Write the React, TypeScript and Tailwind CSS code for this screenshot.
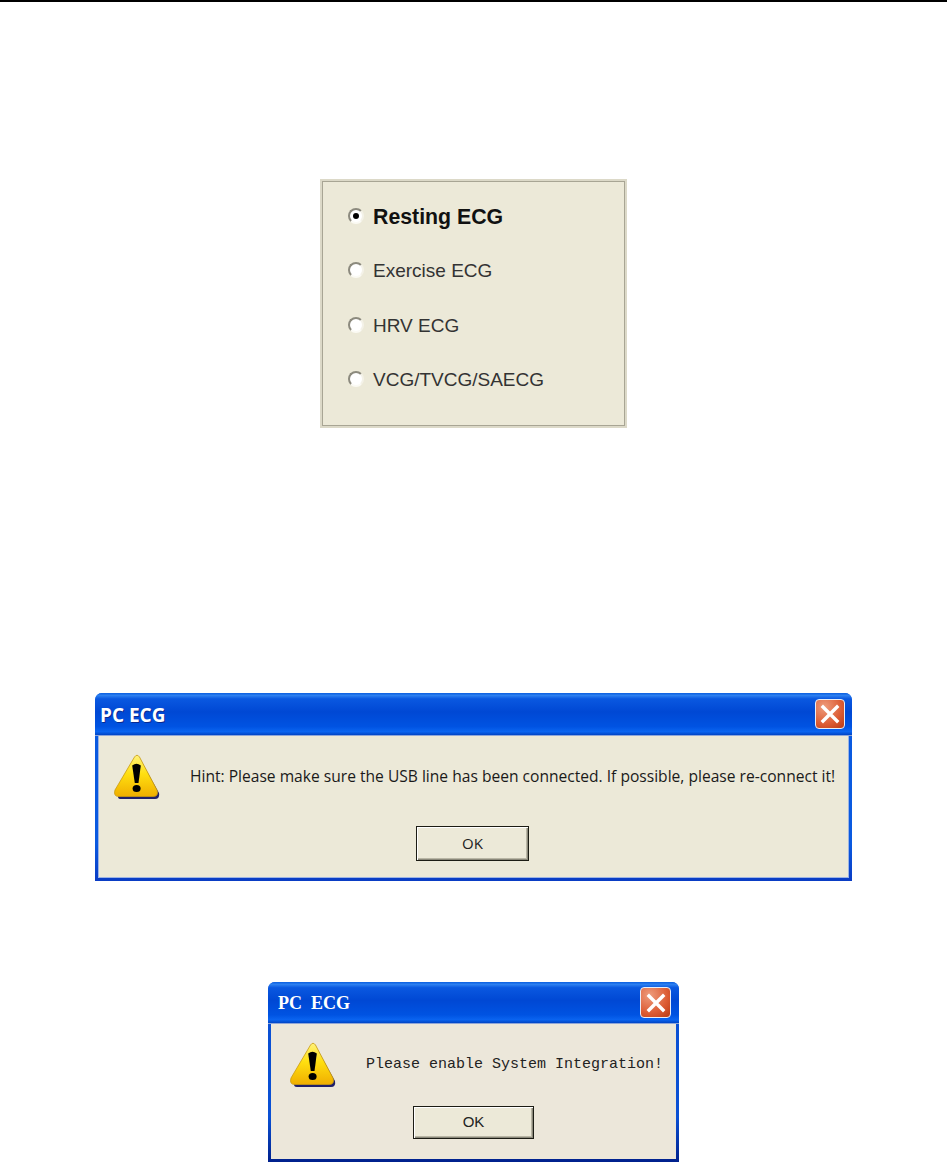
import React from 'react';

const modes = [
  { label: 'Resting ECG', active: true },
  { label: 'Exercise ECG', active: false },
  { label: 'HRV ECG', active: false },
  { label: 'VCG/TVCG/SAECG', active: false },
];

function WarningIcon({ id, className }: { id: string; className: string }) {
  return (
    <svg viewBox="0 0 46 46" className={className}>
      <defs>
        <linearGradient id={id} x1="0" y1="0" x2="0" y2="1">
          <stop offset="0" stopColor="#fff27a" />
          <stop offset="0.45" stopColor="#ffdf10" />
          <stop offset="1" stopColor="#f0ae00" />
        </linearGradient>
      </defs>
      <path d="M25 3 L45 39 Q46 45 41 45 L7 45 Q3 45 4.5 41 Z" fill="#20206a" />
      <path d="M20.5 3 Q23 -0.5 25.5 3 L43 36 Q45 42.5 39 42.5 L5 42.5 Q-1 42.5 1 36 Z" fill={`url(#${id})`} stroke="#c99a10" strokeWidth="0.8" />
      <path d="M18.2 11.5 Q22.5 8 26.8 11.5 L24.5 29 L20.8 29 Z" fill="#000" />
      <ellipse cx="22.6" cy="34.5" rx="4" ry="3.6" fill="#000" />
    </svg>
  );
}

function CloseButton({ className }: { className: string }) {
  return (
    <div className={`flex items-center justify-center rounded-[4px] border border-[#e8eef8] bg-[radial-gradient(circle_at_30%_25%,#ee9c7c,#dc5c34_60%,#b93a14)] ${className}`}>
      <svg viewBox="0 0 20 20" className="h-[20px] w-[20px]">
        <path d="M3 3 L17 17 M17 3 L3 17" stroke="#fff" strokeWidth="3.4" strokeLinecap="square" />
      </svg>
    </div>
  );
}

function TitleBar({ className, children }: { className: string; children: React.ReactNode }) {
  return (
    <div className={`flex items-center justify-between rounded-t-[7px] border-b border-[#8fa6d8] bg-[linear-gradient(to_bottom,#0a5fe0_0%,#2c7ff0_6%,#0a58e0_14%,#0048d4_45%,#0053e2_80%,#0a64f0_92%,#0044c4_100%)] text-white ${className}`}>
      {children}
    </div>
  );
}

function OkButton({ className }: { className: string }) {
  return (
    <div className={`flex items-center justify-center border border-[#1c1c14] bg-[#ece9d8] text-[#222] shadow-[inset_1px_1px_0_#fff,inset_-1px_-1px_0_#8a887a,inset_-2px_-2px_0_#b8b5a4] ${className}`}>
      OK
    </div>
  );
}

export default function App() {
  return (
    <div className="flex min-h-[1164px] flex-col items-center bg-white font-['Liberation_Sans',sans-serif]">
      <div className="h-[2px] w-full bg-black" />

      <div className="mt-[177px] flex h-[249px] w-[307px] flex-col gap-[34.4px] border-2 border-[#dcd9c8] bg-[#ece9d8] pl-[26px] pt-[25px] shadow-[inset_0_0_0_1px_#a8a594]">
        {modes.map((mode) => (
          <div key={mode.label} className="flex h-[20px] items-center gap-[9px]">
            <div className="flex h-[16px] w-[16px] items-center justify-center rounded-full border-2 border-[#8c8a7e] border-r-[#f4f2e8] border-b-[#fbfaf4] bg-white">
              {mode.active && <div className="h-[6px] w-[6px] rounded-full bg-black" />}
            </div>
            <span className={mode.active ? 'pt-[3px] text-[21.3px] font-bold text-[#111]' : 'pt-[2px] text-[19px] text-[#333]'}>
              {mode.label}
            </span>
          </div>
        ))}
      </div>

      <div className="mt-[265px] w-[757px] rounded-t-[7px] bg-[linear-gradient(to_bottom,#0a5ae0_80%,#0a3cc4)]">
        <TitleBar className="h-[43px] pl-[5px] pr-[7px] font-['Open_Sans',sans-serif] text-[19px] font-bold [text-shadow:1px_1px_0_#0a2a90]">
          <span className="pt-[2px]">PC ECG</span>
          <CloseButton className="h-[30px] w-[30px]" />
        </TitleBar>
        <div className="mx-[3px] mb-[3px] flex h-[142px] flex-col border-x border-b border-[#9db4e4] bg-[#ece9d8] pl-[15px] pt-[18px]">
          <div className="flex items-center gap-[30px]">
            <WarningIcon id="warn-usb" className="h-[46px] w-[46px] shrink-0" />
            <span className="whitespace-nowrap font-['Open_Sans',sans-serif] text-[15.6px] text-[#1a1a1a]">
              Hint: Please make sure the USB line has been connected. If possible, please re-connect it!
            </span>
          </div>
          <OkButton className="ml-[302px] mt-[26px] h-[35px] w-[113px] font-['Open_Sans',sans-serif] text-[15px]" />
        </div>
      </div>

      <div className="mt-[101px] w-[411px] rounded-t-[7px] bg-[linear-gradient(to_bottom,#0a50d4_75%,#00208c)]">
        <TitleBar className="h-[42px] pl-[10px] pr-[8px] font-['Liberation_Serif',serif] text-[18px] font-bold">
          <span className="whitespace-pre pt-[2px]">PC  ECG</span>
          <CloseButton className="h-[31px] w-[31px]" />
        </TitleBar>
        <div className="mx-[3px] mb-[3px] flex h-[135px] flex-col bg-[#ece7da] pl-[19px] pt-[18px]">
          <div className="flex items-center gap-[30px]">
            <WarningIcon id="warn-integration" className="h-[46px] w-[46px] shrink-0" />
            <span className="whitespace-nowrap font-['Liberation_Mono',monospace] text-[15px] text-[#222]">
              Please enable System Integration!
            </span>
          </div>
          <OkButton className="ml-[123px] mt-[18px] h-[33px] w-[121px] text-[15px]" />
        </div>
      </div>
    </div>
  );
}
